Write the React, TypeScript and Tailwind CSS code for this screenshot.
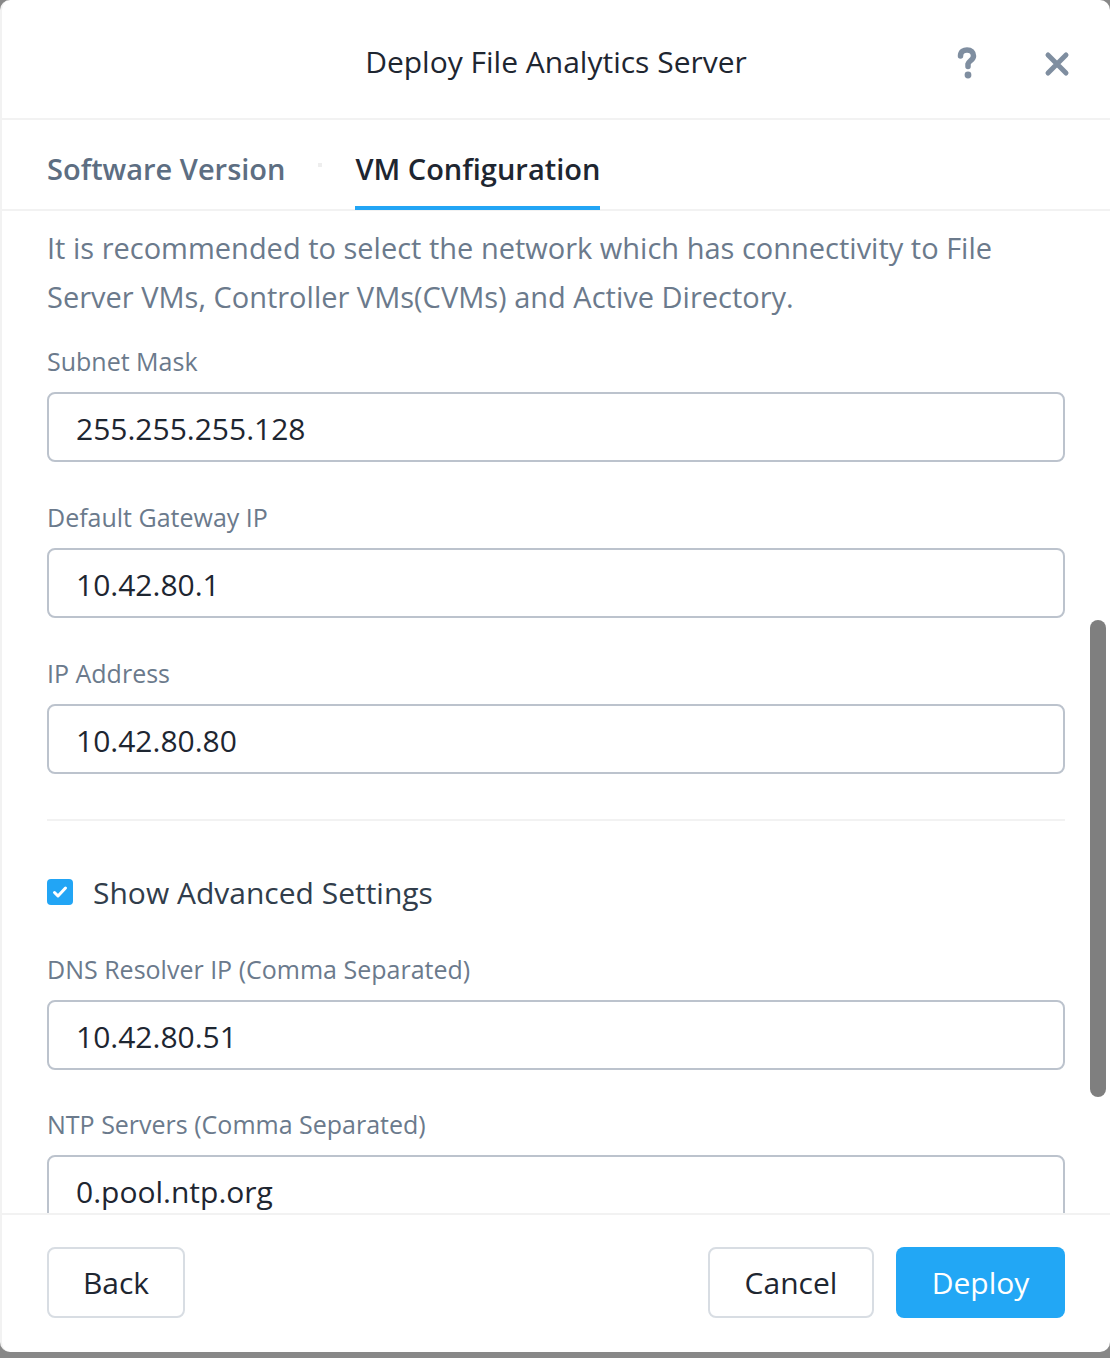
import React from "react";

const font = { fontFamily: "'Open Sans', Lato, sans-serif" };

function Field({ label, value, mt }: { label: string; value: string; mt: string }) {
  return (
    <div className={`flex flex-col ${mt}`}>
      <div className="text-[25px] leading-[30px] text-[#6b7a8c]">{label}</div>
      <div className="mt-[16px] h-[70px] rounded-[8px] border-2 border-[#bcc3cd] flex items-center pt-[2px] px-[27px] text-[30px] text-[#1e2631] shrink-0">
        {value}
      </div>
    </div>
  );
}

export default function App() {
  return (
    <div className="w-[1110px] h-[1358px] bg-[#888888]" style={font}>
      <div className="w-[1110px] h-[1352px] bg-white rounded-[10px] flex flex-col overflow-hidden border-l-2 border-[#f2f2f2]">
        {/* header */}
        <div className="h-[120px] shrink-0 relative flex items-center justify-center pt-[4px] border-b-2 border-[#f2f2f2]">
          <div className="text-[30px] text-[#1e2631]">Deploy File Analytics Server</div>
          <div className="absolute right-[40px] top-[47px] flex items-center gap-[66px]">
            <svg width="22" height="34" viewBox="0 0 22 34" fill="none">
              <path d="M4.5 9 C4.5 4.5 8 3 11 3 C15 3 17.5 5 17.5 9 C17.5 13 12.5 14 12 17 L12 19.5" stroke="#7f8ea0" strokeWidth="5.5" strokeLinecap="round" fill="none" />
              <circle cx="12" cy="28" r="3.4" fill="#7f8ea0" />
            </svg>
            <svg width="26" height="26" viewBox="0 0 26 26">
              <path d="M4 4 L22 22 M22 4 L4 22" stroke="#7f8ea0" strokeWidth="5" strokeLinecap="round" />
            </svg>
          </div>
        </div>
        {/* tabs */}
        <div className="h-[91px] shrink-0 flex items-stretch px-[45px] border-b-2 border-[#f2f2f2]">
          <div className="flex items-center pt-[8px] text-[29px] font-semibold text-[#5d6e82]">Software Version</div>
          <div className="flex items-center mx-[33px]">
            <div className="w-[4px] h-[4px] bg-[#eeeeee]" />
          </div>
          <div className="relative flex items-center pt-[8px] text-[29px] font-semibold text-[#1e2631]">
            VM Configuration
            <div className="absolute left-0 right-0 -bottom-[1px] h-[4px] bg-[#22a5f5]" />
          </div>
        </div>
        {/* body */}
        <div className="relative flex-1 overflow-hidden">
          <div className="flex flex-col pl-[45px] pr-[45px] pt-[12px]">
            <p className="text-[29px] leading-[49px] text-[#6b7a8c]">
              It is recommended to select the network which has connectivity to File<br />Server VMs, Controller VMs(CVMs) and Active Directory.
            </p>
            <Field label="Subnet Mask" value="255.255.255.128" mt="mt-[25px]" />
            <Field label="Default Gateway IP" value="10.42.80.1" mt="mt-[40px]" />
            <Field label="IP Address" value="10.42.80.80" mt="mt-[40px]" />
            <div className="mt-[45px] h-[2px] bg-[#f2f2f2]" />
            <div className="mt-[51px] flex items-center h-[40px]">
              <div className="w-[26px] h-[26px] rounded-[4px] bg-[#22a5f5] flex items-center justify-center">
                <svg width="16" height="14" viewBox="0 0 16 14">
                  <path d="M2.5 7.5 L6 11 L13.5 3" stroke="white" strokeWidth="3" strokeLinecap="round" strokeLinejoin="round" fill="none" />
                </svg>
              </div>
              <span className="ml-[20px] text-[30px] text-[#313d4b]">Show Advanced Settings</span>
            </div>
            <Field label="DNS Resolver IP (Comma Separated)" value="10.42.80.51" mt="mt-[42px]" />
            <Field label="NTP Servers (Comma Separated)" value="0.pool.ntp.org" mt="mt-[39px]" />
          </div>
          <div className="absolute right-[4px] top-[409px] w-[16px] h-[477px] rounded-full bg-[#7f7f7f]" />
        </div>
        {/* footer */}
        <div className="h-[139px] shrink-0 border-t-2 border-[#f2f2f2] flex items-start pt-[32px] px-[45px]">
          <button className="h-[71px] w-[138px] rounded-[8px] border-2 border-[#d8dde3] text-[30px] text-[#1e2631]" style={font}>Back</button>
          <div className="flex-1" />
          <button className="h-[71px] w-[166px] rounded-[8px] border-2 border-[#d8dde3] text-[30px] text-[#1e2631]" style={font}>Cancel</button>
          <button className="ml-[22px] h-[71px] w-[169px] rounded-[8px] bg-[#22a7f5] text-[30px] text-white" style={font}>Deploy</button>
        </div>
      </div>
    </div>
  );
}
